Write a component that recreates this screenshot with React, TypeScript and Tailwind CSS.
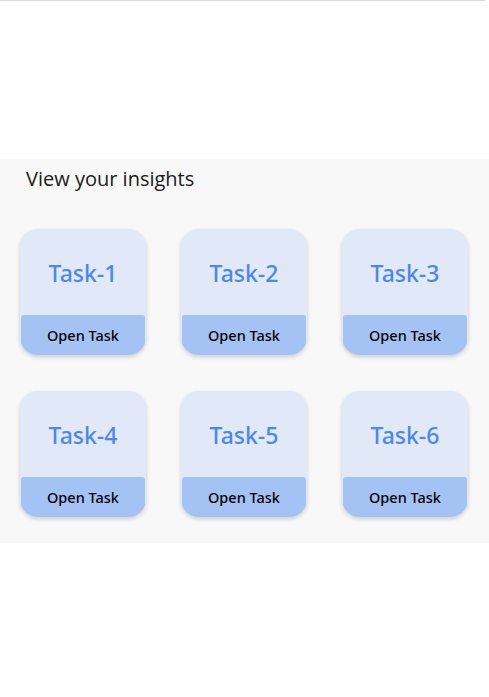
const tasks = ["Task-1", "Task-2", "Task-3", "Task-4", "Task-5", "Task-6"];

function TaskCard({ name }: { name: string }) {
  return (
    <div className="flex h-[126px] w-[126px] flex-col overflow-hidden rounded-[18px] bg-[#e1e8f8] shadow-[0_2px_4px_rgba(0,0,0,0.18)]">
      <div className="flex flex-1 items-center justify-center pt-[2px] font-['Noto_Sans',sans-serif] text-[23px] font-medium text-[#4a88f0]">
        {name}
      </div>
      <button
        type="button"
        className="mx-px h-[40px] rounded-t-[3px] bg-[#a4c2f4] pt-px font-['Noto_Sans',sans-serif] text-[14.5px] font-medium text-black"
      >
        Open Task
      </button>
    </div>
  );
}

export default function App() {
  return (
    <div className="min-h-[697px] w-full bg-white font-['Open_Sans','Noto_Sans',sans-serif]">
      <div className="h-px w-[485px] bg-[#d9d9d9]" />
      <section className="mt-[158px] bg-[#f8f8f8] px-5 pb-[26px] pt-[6px]">
        <h2 className="pl-[6px] text-[20px] leading-[28px] text-[#1a1a1a]">
          View your insights
        </h2>
        <div className="mt-[36px] grid grid-cols-[repeat(3,126px)] gap-x-[35px] gap-y-[36px]">
          {tasks.map((t) => (
            <TaskCard key={t} name={t} />
          ))}
        </div>
      </section>
    </div>
  );
}
